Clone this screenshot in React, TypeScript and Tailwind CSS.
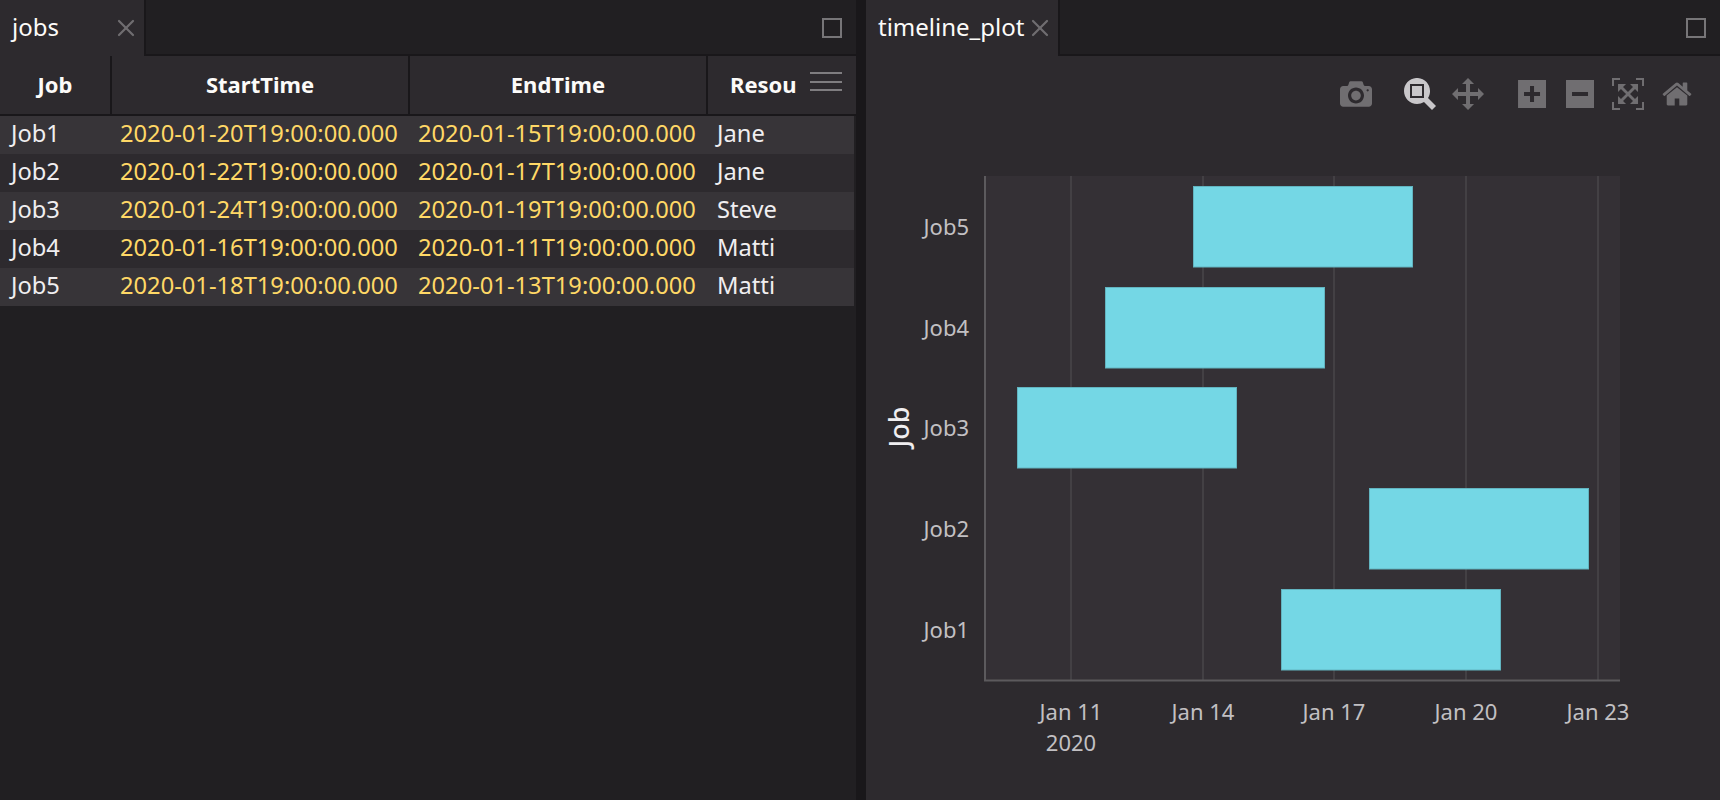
import { X } from "lucide-react";

const FONT = "font-['Noto_Sans',sans-serif]";

const jobs = [
  { job: "Job1", start: "2020-01-20T19:00:00.000", end: "2020-01-15T19:00:00.000", res: "Jane" },
  { job: "Job2", start: "2020-01-22T19:00:00.000", end: "2020-01-17T19:00:00.000", res: "Jane" },
  { job: "Job3", start: "2020-01-24T19:00:00.000", end: "2020-01-19T19:00:00.000", res: "Steve" },
  { job: "Job4", start: "2020-01-16T19:00:00.000", end: "2020-01-11T19:00:00.000", res: "Matti" },
  { job: "Job5", start: "2020-01-18T19:00:00.000", end: "2020-01-13T19:00:00.000", res: "Matti" },
];

// bars in screen px, top row first
const bars = [
  { label: "Job5", x: 1193.5, y: 186.5 },
  { label: "Job4", x: 1105.5, y: 287.5 },
  { label: "Job3", x: 1017.5, y: 387.5 },
  { label: "Job2", x: 1369.5, y: 488.5 },
  { label: "Job1", x: 1281.5, y: 589.5 },
];

const ticks = [
  { x: 1071, label: "Jan 11" },
  { x: 1203, label: "Jan 14" },
  { x: 1334, label: "Jan 17" },
  { x: 1466, label: "Jan 20" },
  { x: 1598, label: "Jan 23" },
];

const modebar = [
  {
    w: 32,
    ml: "ml-0",
    vb: "0 0 1000 1000",
    active: false,
    d: "M500 450c-83 0-150-67-150-150 0-83 67-150 150-150 83 0 150 67 150 150 0 83-67 150-150 150z m400 150h-120c-16 0-34 13-39 29l-31 93c-6 15-23 28-40 28h-340c-16 0-34-13-39-28l-31-94c-6-15-23-28-40-28h-120c-55 0-100-45-100-100v-450c0-55 45-100 100-100h800c55 0 100 45 100 100v450c0 55-45 100-100 100z m-400-550c-138 0-250 112-250 250 0 138 112 250 250 250 138 0 250-112 250-250 0-138-112-250-250-250z m365 380c-19 0-35 16-35 35 0 19 16 35 35 35 19 0 35-16 35-35 0-19-16-35-35-35z",
  },
  {
    w: 32,
    ml: "ml-[32px]",
    vb: "0 0 1000 1000",
    active: true,
    d: "M1000-25l-250 251c40 63 63 138 63 219 0 224-182 406-407 406-224 0-406-182-406-406s183-406 407-406c80 0 155 22 218 62l250-250 125 125z m-812 250l0 438 437 0 0-438-437 0z m62 375l313 0 0-312-313 0 0 312z",
  },
  {
    w: 32,
    ml: "ml-[16px]",
    vb: "0 0 1000 1000",
    active: false,
    d: "m1000 350l-187 188 0-125-250 0 0 250 125 0-188 187-187-187 125 0 0-250-250 0 0 125-188-188 186-187 0 125 252 0 0-250-125 0 187-188 188 188-125 0 0 250 250 0 0-126 187 188z",
  },
  {
    w: 28,
    ml: "ml-[34px]",
    vb: "0 0 875 1000",
    active: false,
    d: "M1 787l0-875 875 0 0 875-875 0z m687-500l-187 0 0-187-125 0 0 187-188 0 0 125 188 0 0 187 125 0 0-187 187 0 0-125z",
  },
  {
    w: 28,
    ml: "ml-[20px]",
    vb: "0 0 875 1000",
    active: false,
    d: "M0 788l0-876 875 0 0 876-875 0z m688-500l-500 0 0 125 500 0 0-125z",
  },
  {
    w: 32,
    ml: "ml-[18px]",
    vb: "0 0 1000 1000",
    active: false,
    d: "M250 850l-187 0-63 0 0-62 0-188 63 0 0 188 187 0 0 62z m688 0l-188 0 0-62 188 0 0-188 62 0 0 188 0 62-62 0z m-875-938l0 188-63 0 0-188 0-62 63 0 187 0 0 62-187 0z m875 188l0-188-188 0 0-62 188 0 62 0 0 62 0 188-62 0z m-125 188l-1 0-93-94-156 156 156 156 92-93 2 0 0 250-250 0 0-2 93-92-156-156-156 156 94 92 0 2-250 0 0-250 0 0 93 93 157-156-157-156-93 94 0 0 0-250 250 0 0 0-94 93 156 157 156-157-93-93 0 0 250 0 0 250z",
  },
  {
    w: 30,
    ml: "ml-[18px]",
    vb: "0 0 928.6 1000",
    active: false,
    d: "m786 296v-267q0-15-11-26t-25-10h-214v214h-143v-214h-214q-15 0-25 10t-11 26v267q0 1 0 2t0 2l321 264 321-264q1-1 1-4z m124 39l-34-41q-5-5-12-6h-2q-7 0-12 3l-386 322-386-322q-7-4-13-4-7 2-12 7l-35 41q-4 5-3 13t6 12l401 334q18 15 42 15t43-15l136-114v109q0 8 5 13t13 5h107q8 0 13-5t5-13v-227l122-102q5-5 6-12t-4-13z",
  },
];

function TabBar({ title, tabWidth, titleClass, maxMargin }: { title: string; tabWidth: string; titleClass: string; maxMargin: string }) {
  return (
    <div className="flex h-[56px] shrink-0 bg-[#211f22]">
      <div className={`flex h-full items-start ${tabWidth} bg-[#2d2a2e]`}>
        <span className={`mt-[9px] text-[24px] leading-[36px] text-[#fcfbf9] ${titleClass}`}>{title}</span>
        <X className="mt-[14px] h-[28px] w-[28px] shrink-0 text-[#6f6d70]" strokeWidth={1.9} />
      </div>
      <div className="flex flex-1 items-start justify-end border-b-2 border-l-2 border-[#19171a]">
        <div className={`mt-[18px] h-[20px] w-[20px] border-2 border-[#777578] ${maxMargin}`} />
      </div>
    </div>
  );
}

function JobsPanel() {
  const cols = "grid grid-cols-[112px_298px_298px_146px]";
  const head = "flex h-[58px] items-center justify-center border-r-2 border-[#19171a] pb-[2px] text-[22px] font-bold text-[#fcfbf9]";
  return (
    <div className="flex w-[856px] shrink-0 flex-col bg-[#211f22]">
      <TabBar title="jobs" tabWidth="w-[144px]" titleClass="ml-[12px] w-[100px]" maxMargin="mr-[14px]" />
      <div className={`${cols} border-b-2 border-[#19171a] bg-[#2d2a2e]`}>
        <div className={head}>Job</div>
        <div className={head}>StartTime</div>
        <div className={head}>EndTime</div>
        <div className="flex h-[58px] items-center pb-[2px] pl-[22px]">
          <span className="w-[80px] text-[22px] font-bold text-[#fcfbf9]">Resou</span>
          <div className="mb-[5px] flex w-[32px] flex-col gap-[6.5px]">
            <div className="h-[2px] bg-[#7f7d80]" />
            <div className="h-[2px] bg-[#7f7d80]" />
            <div className="h-[2px] bg-[#7f7d80]" />
          </div>
        </div>
      </div>
      <div className="w-[854px]">
        {jobs.map((row, i) => (
          <div key={row.job} className={`${cols} h-[38px] items-start text-[23.7px] leading-[35px] ${i % 2 === 0 ? "bg-[#373438]" : "bg-[#2d2a2e]"}`}>
            <div className="pl-[11px] text-[#f0eef0]">{row.job}</div>
            <div className="pl-[8px] text-[#ffd866]">{row.start}</div>
            <div className="pl-[8px] text-[#ffd866]">{row.end}</div>
            <div className="pl-[9px] text-[#f0eef0]">{row.res}</div>
          </div>
        ))}
      </div>
    </div>
  );
}

function Modebar() {
  return (
    <div className="flex h-[32px] items-start pl-[474px]">
      {modebar.map((b, i) => (
        <svg
          key={i}
          viewBox={b.vb}
          width={b.w}
          height={32}
          className={`shrink-0 ${b.ml} ${b.active ? "text-[#c9c7ca]" : "text-[#706e71]"}`}
        >
          <path d={b.d} fill="currentColor" transform="matrix(1 0 0 -1 0 850)" />
        </svg>
      ))}
    </div>
  );
}

function TimelinePlot() {
  return (
    <svg viewBox="866 110 854 690" width={854} height={690} className="block">
      <rect x={985} y={176} width={635} height={505} fill="#343035" />
      {ticks.map((t) => (
        <line key={t.x} x1={t.x} x2={t.x} y1={176} y2={680} stroke="#434044" strokeWidth={2} />
      ))}
      <line x1={985} x2={985} y1={176} y2={681} stroke="#5c5a5d" strokeWidth={2} />
      <line x1={984} x2={1620} y1={680.5} y2={680.5} stroke="#5c5a5d" strokeWidth={2} />
      {bars.map((b) => (
        <g key={b.label}>
          <rect x={b.x} y={b.y} width={219} height={80.5} fill="#74d7e5" stroke="#62b4c0" strokeWidth={1} />
          <text x={969} y={b.y + 48} textAnchor="end" fill="#c2c0c3" fontSize={22}>
            {b.label}
          </text>
        </g>
      ))}
      <text transform="translate(909 427) rotate(-90)" textAnchor="middle" fill="#f0eef0" fontSize={27} fontWeight={500}>
        Job
      </text>
      {ticks.map((t) => (
        <text key={t.label} x={t.x} y={720} textAnchor="middle" fill="#c2c0c3" fontSize={22}>
          {t.label}
        </text>
      ))}
      <text x={1071} y={751} textAnchor="middle" fill="#c2c0c3" fontSize={22}>
        2020
      </text>
    </svg>
  );
}

export default function App() {
  return (
    <div className={`flex h-[800px] w-[1720px] overflow-hidden bg-[#19171a] ${FONT}`}>
      <JobsPanel />
      <div className="w-[10px] shrink-0 bg-[#19171a]" />
      <div className="flex flex-1 flex-col bg-[#2d2a2e]">
        <TabBar title="timeline_plot" tabWidth="w-[192px]" titleClass="ml-[12px] w-[148px]" maxMargin="mr-[14px]" />
        <div className="pt-[22px]">
          <Modebar />
          <TimelinePlot />
        </div>
      </div>
    </div>
  );
}
